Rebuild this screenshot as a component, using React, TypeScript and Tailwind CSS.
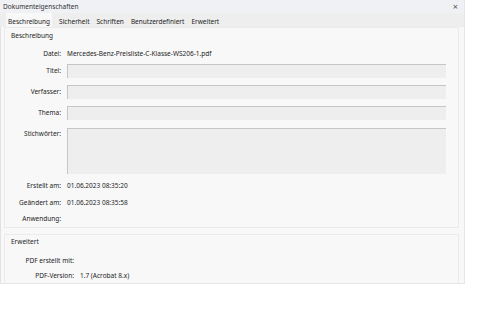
const font = { fontFamily: '"Noto Sans", "Open Sans", sans-serif' };

const fields = ["Titel:", "Verfasser:", "Thema:"];

const tabs = ["Beschreibung", "Sicherheit", "Schriften", "Benutzerdefiniert", "Erweitert"];

function InfoRow({ label, value, labelW = "w-[56px]", h = "h-[17px]" }: { label: string; value?: string; labelW?: string; h?: string }) {
  return (
    <div className={`flex items-center ${h}`}>
      <span className={`${labelW} text-right shrink-0`}>{label}</span>
      <span className="pl-[6px]">{value}</span>
    </div>
  );
}

export default function App() {
  return (
    <div className="w-[500px] h-[333px] bg-white text-[6.5px] text-[#1c1c1c]" style={font}>
      <div className="w-[465px] h-[284px] flex flex-col bg-[#f8f8f8] border-r border-b border-[#e6e6e6]">
        <div className="h-[15px] flex items-center justify-between pl-[3px] pr-[6px] bg-[#eff1f5] text-[#333]">
          <span>Dokumenteigenschaften</span>
          <span className="text-[9px] text-[#555] leading-none">×</span>
        </div>
        <div className="h-[15px] flex items-stretch gap-[7px] pl-[6px] bg-[#eeeeee]">
          {tabs.map((t, i) => (
            <span
              key={t}
              className={i === 0 ? "flex items-center pt-[4px] px-[2px] bg-[#f8f8f8]" : "flex items-center pt-[4px]"}
            >
              {t}
            </span>
          ))}
        </div>
        <div className="flex-1 flex flex-col px-[3px] pr-[5px] gap-[6px] border-l border-[#e2e2e2]">
          <div className="border border-[#ebebeb] h-[201px] flex flex-col pr-[12px]">
            <div className="pl-[6px] pt-[1px] h-[15px] flex items-center">Beschreibung</div>
            <InfoRow label="Datei:" value="Mercedes-Benz-Preisliste-C-Klasse-WS206-1.pdf" h="h-[16px] mt-[3px]" />
            <div className="flex flex-col gap-[7px] mt-[2px]">
              {fields.map((f) => (
                <div key={f} className="flex items-center">
                  <span className="w-[56px] text-right shrink-0">{f}</span>
                  <div className="ml-[6px] flex-1 h-[14px] bg-[#eeeeee] border-t border-l border-[#c6c6c6]" />
                </div>
              ))}
              <div className="flex items-start mt-[1px]">
                <span className="w-[56px] text-right shrink-0 mt-[1px]">Stichwörter:</span>
                <div className="ml-[6px] flex-1 h-[46px] bg-[#eeeeee] border-t border-l border-[#c6c6c6]" />
              </div>
            </div>
            <div className="mt-[3px] flex flex-col">
              <InfoRow label="Erstellt am:" value="01.06.2023 08:35:20" />
              <InfoRow label="Geändert am:" value="01.06.2023 08:35:58" />
              <InfoRow label="Anwendung:" h="h-[16px]" />
            </div>
          </div>
          <div className="flex-1 border-t border-x border-[#ebebeb] flex flex-col">
            <div className="pl-[6px] h-[14px] flex items-center">Erweitert</div>
            <div className="mt-[4px]">
              <InfoRow label="PDF erstellt mit:" labelW="w-[69px]" h="h-[15px]" />
              <InfoRow label="PDF-Version:" value="1.7 (Acrobat 8.x)" labelW="w-[69px]" h="h-[15px]" />
            </div>
          </div>
        </div>
      </div>
    </div>
  );
}
